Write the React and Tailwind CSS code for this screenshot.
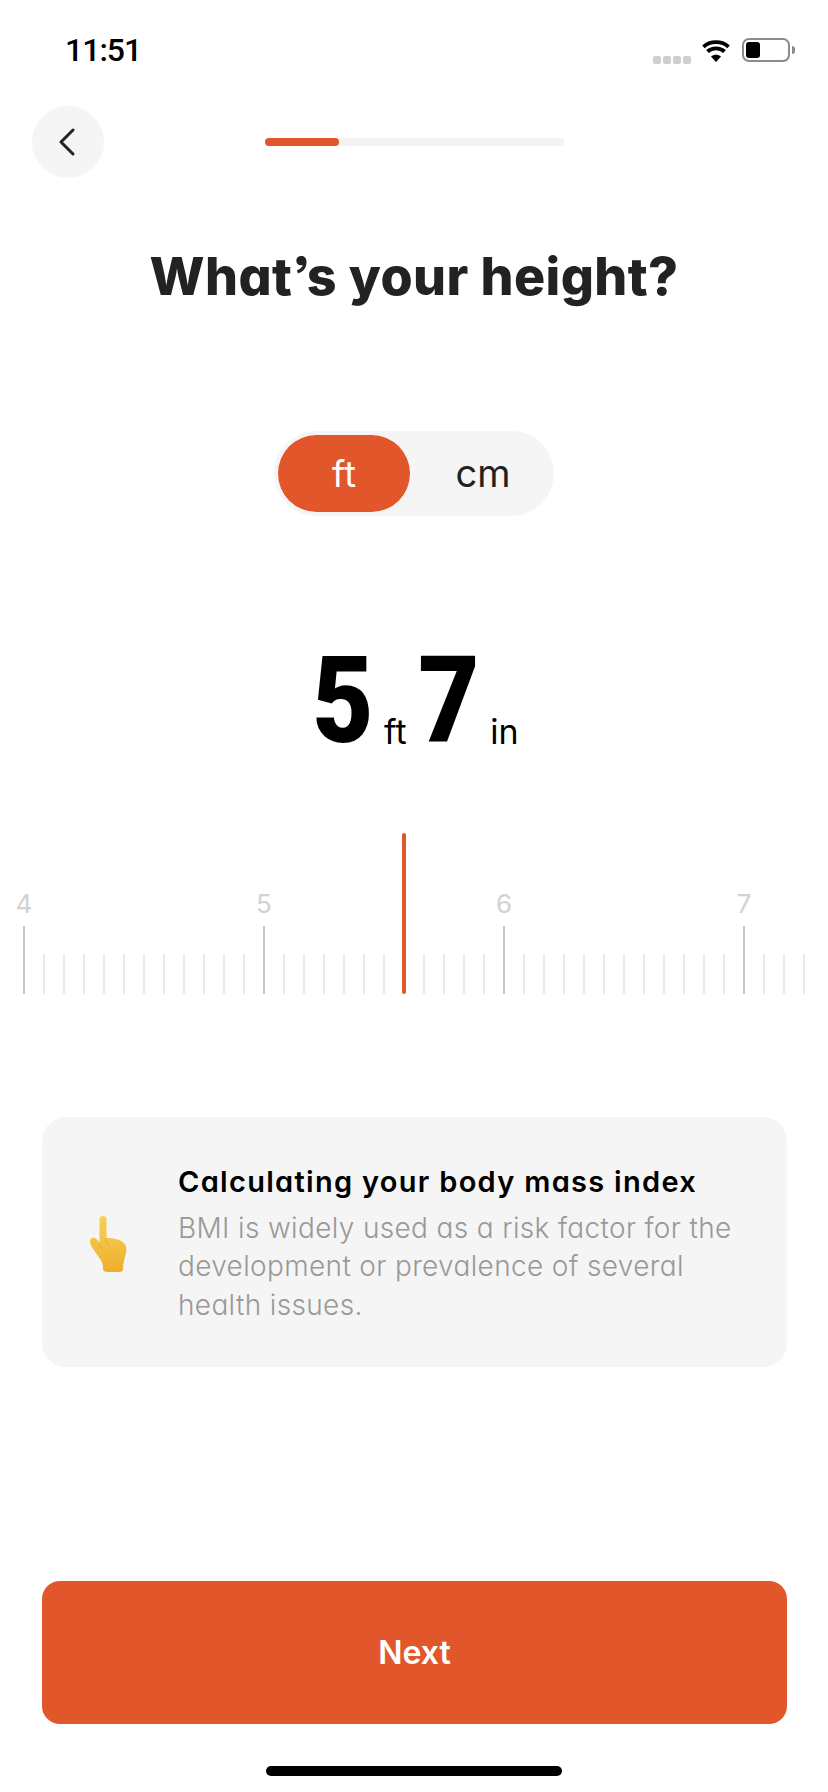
import React from 'react';

const sans = "font-['Inter',sans-serif] [font-feature-settings:'cv11','ss03']";

const StatusBar = () => (
  <div className="flex h-[99px] items-center pl-[65px] pr-[33px]">
    <span className="font-['Roboto',sans-serif] text-[32px] font-medium leading-none tracking-[-1px] text-black">11:51</span>
    <div className="ml-auto flex items-center">
      <div className="mt-[20px] flex gap-[2px]">
        {[0, 1, 2, 3].map((i) => (
          <span key={i} className="h-2 w-[8px] rounded-[2px] bg-[#cfcfcf]" />
        ))}
      </div>
      <svg className="ml-[9px]" width="32" height="24" viewBox="0 0 32 24">
        <path d="M16 24l-5-5.5c2.8-2.2 7.2-2.2 10 0z" fill="#000" />
        <path d="M7.5 14.5c4.6-4.2 12.4-4.2 17 0M3.5 9.8C9.8 3.6 22.2 3.6 28.5 9.8" transform="translate(0 -1)" fill="none" stroke="#000" strokeWidth="3.8" />
      </svg>
      <div className="ml-[10px] flex h-6 w-[48px] items-center rounded-[7px] border-2 border-[#8c8c8c] p-[2px]">
        <div className="h-full w-[14px] rounded-[3px] bg-black" />
      </div>
      <div className="ml-[2px] h-[8px] w-[3px] rounded-r-full bg-[#8c8c8c]" />
    </div>
  </div>
);

const Hand = () => (
  <svg className="ml-[48px] shrink-0" width="37" height="56" viewBox="0 0 37 56">
    <defs>
      <linearGradient id="hand" x1="0" y1="0" x2="0" y2="1">
        <stop offset="0" stopColor="#F7D258" />
        <stop offset="1" stopColor="#EFAE2C" />
      </linearGradient>
    </defs>
    <path
      d="M9.5 3.5a3.5 3.5 0 0 1 7 0V22C22 22 30 23 34 27C37 30 37 36 35 41C34 45 33 48 33 53C33 56 31 56 23 56C15 56 13 56 13 52C13 47 11 44 8 40C5 35 0 30 0 25C0 22 3 21 5 22C7 23 8.5 25 9.5 27Z"
      fill="url(#hand)"
    />
    <path d="M16.5 22C15 26 17 29 20 30M9.5 27C10 30 11 32 13 34" fill="none" stroke="#D9941A" strokeOpacity="0.45" strokeWidth="1" />
  </svg>
);

const ticks = Array.from({ length: 40 }, (_, i) => i);

const Ruler = () => (
  <div className="relative mt-[72px] h-[161px]">
    <div className="flex h-full items-end pl-[14px]">
      {ticks.map((i) =>
        i % 12 === 0 ? (
          <div key={i} className="flex w-5 flex-col items-center">
            <span className="mb-[7px] font-['Inter',sans-serif] text-[26px] leading-[30px] text-[#d2d2d2]">{4 + i / 12}</span>
            <div className="h-[68px] w-[2px] bg-[#c6c6c6]" />
          </div>
        ) : (
          <div key={i} className="flex w-5 justify-center">
            <div className="h-[40px] w-[2px] bg-[#e9e9e9]" />
          </div>
        )
      )}
    </div>
    <div className="absolute left-[402px] top-0 h-full w-1 rounded-full bg-[#E2562C]" />
  </div>
);

export default function App() {
  return (
    <div className={`flex h-[1792px] w-[828px] flex-col overflow-hidden bg-white ${sans}`}>
      <StatusBar />

      <div className="mt-[7px] flex items-center pl-[32px]">
        <button className="flex h-[72px] w-[72px] items-center justify-center rounded-full bg-[#f5f5f5]">
          <svg className="-ml-[2px]" width="20" height="28" viewBox="0 0 20 28" fill="none">
            <path d="M16 2L4 14l12 12" stroke="#222" strokeWidth="3" strokeLinecap="round" strokeLinejoin="round" />
          </svg>
        </button>
        <div className="ml-[161px] h-2 w-[299px] rounded-full bg-[#f3f3f3]">
          <div className="h-full w-[74px] rounded-full bg-[#E2562C]" />
        </div>
      </div>

      <h1 className="mt-[63px] text-center text-[52px] font-extrabold leading-[72px] tracking-[0.4px] text-[#222]">What’s your height?</h1>

      <div className="mt-[118px] flex justify-center">
        <div className="flex h-[85px] w-[280px] items-center rounded-full bg-[#f5f5f5] px-1">
          <div className="flex h-[77px] w-[132px] items-center justify-center rounded-full bg-[#E2562C] text-[36px] text-white">ft</div>
          <div className="flex-1 pl-[6px] text-center text-[38px] text-[#222]">cm</div>
        </div>
      </div>

      <div className="mt-[125px] flex h-[120px] items-end justify-center pr-[2px] font-['Roboto',sans-serif] text-black">
        <span className="inline-block scale-x-[0.88] text-[120px] font-black leading-none">5</span>
        <span className="mb-[12px] ml-[7px] font-['Inter',sans-serif] text-[34px] leading-none">ft</span>
        <span className="ml-[7px] inline-block scale-x-[0.88] text-[120px] font-black leading-none">7</span>
        <span className="mb-[12px] ml-[7px] font-['Inter',sans-serif] text-[34px] leading-none">in</span>
      </div>

      <Ruler />

      <div className="ml-[42px] mr-[41px] mt-[123px] flex h-[250px] items-center rounded-[24px] bg-[#f5f5f5] pt-[3px]">
        <Hand />
        <div className="ml-[51px]">
          <div className="mb-[8px] text-[29px] font-semibold leading-[38px] tracking-[1.3px] text-black">Calculating your body mass index</div>
          <p className="text-[28px] font-light leading-[38.5px] tracking-[0.35px] text-[#999]">
            BMI is widely used as a risk factor for the<br />
            development or prevalence of several<br />
            health issues.
          </p>
        </div>
      </div>

      <button className="ml-[42px] mr-[41px] mt-[214px] flex h-[143px] items-center justify-center rounded-[18px] bg-[#E2562C] text-[32px] font-semibold text-white">
        Next
      </button>

      <div className="mt-[42px] flex justify-center">
        <div className="h-[10px] w-[296px] rounded-full bg-black" />
      </div>
    </div>
  );
}
